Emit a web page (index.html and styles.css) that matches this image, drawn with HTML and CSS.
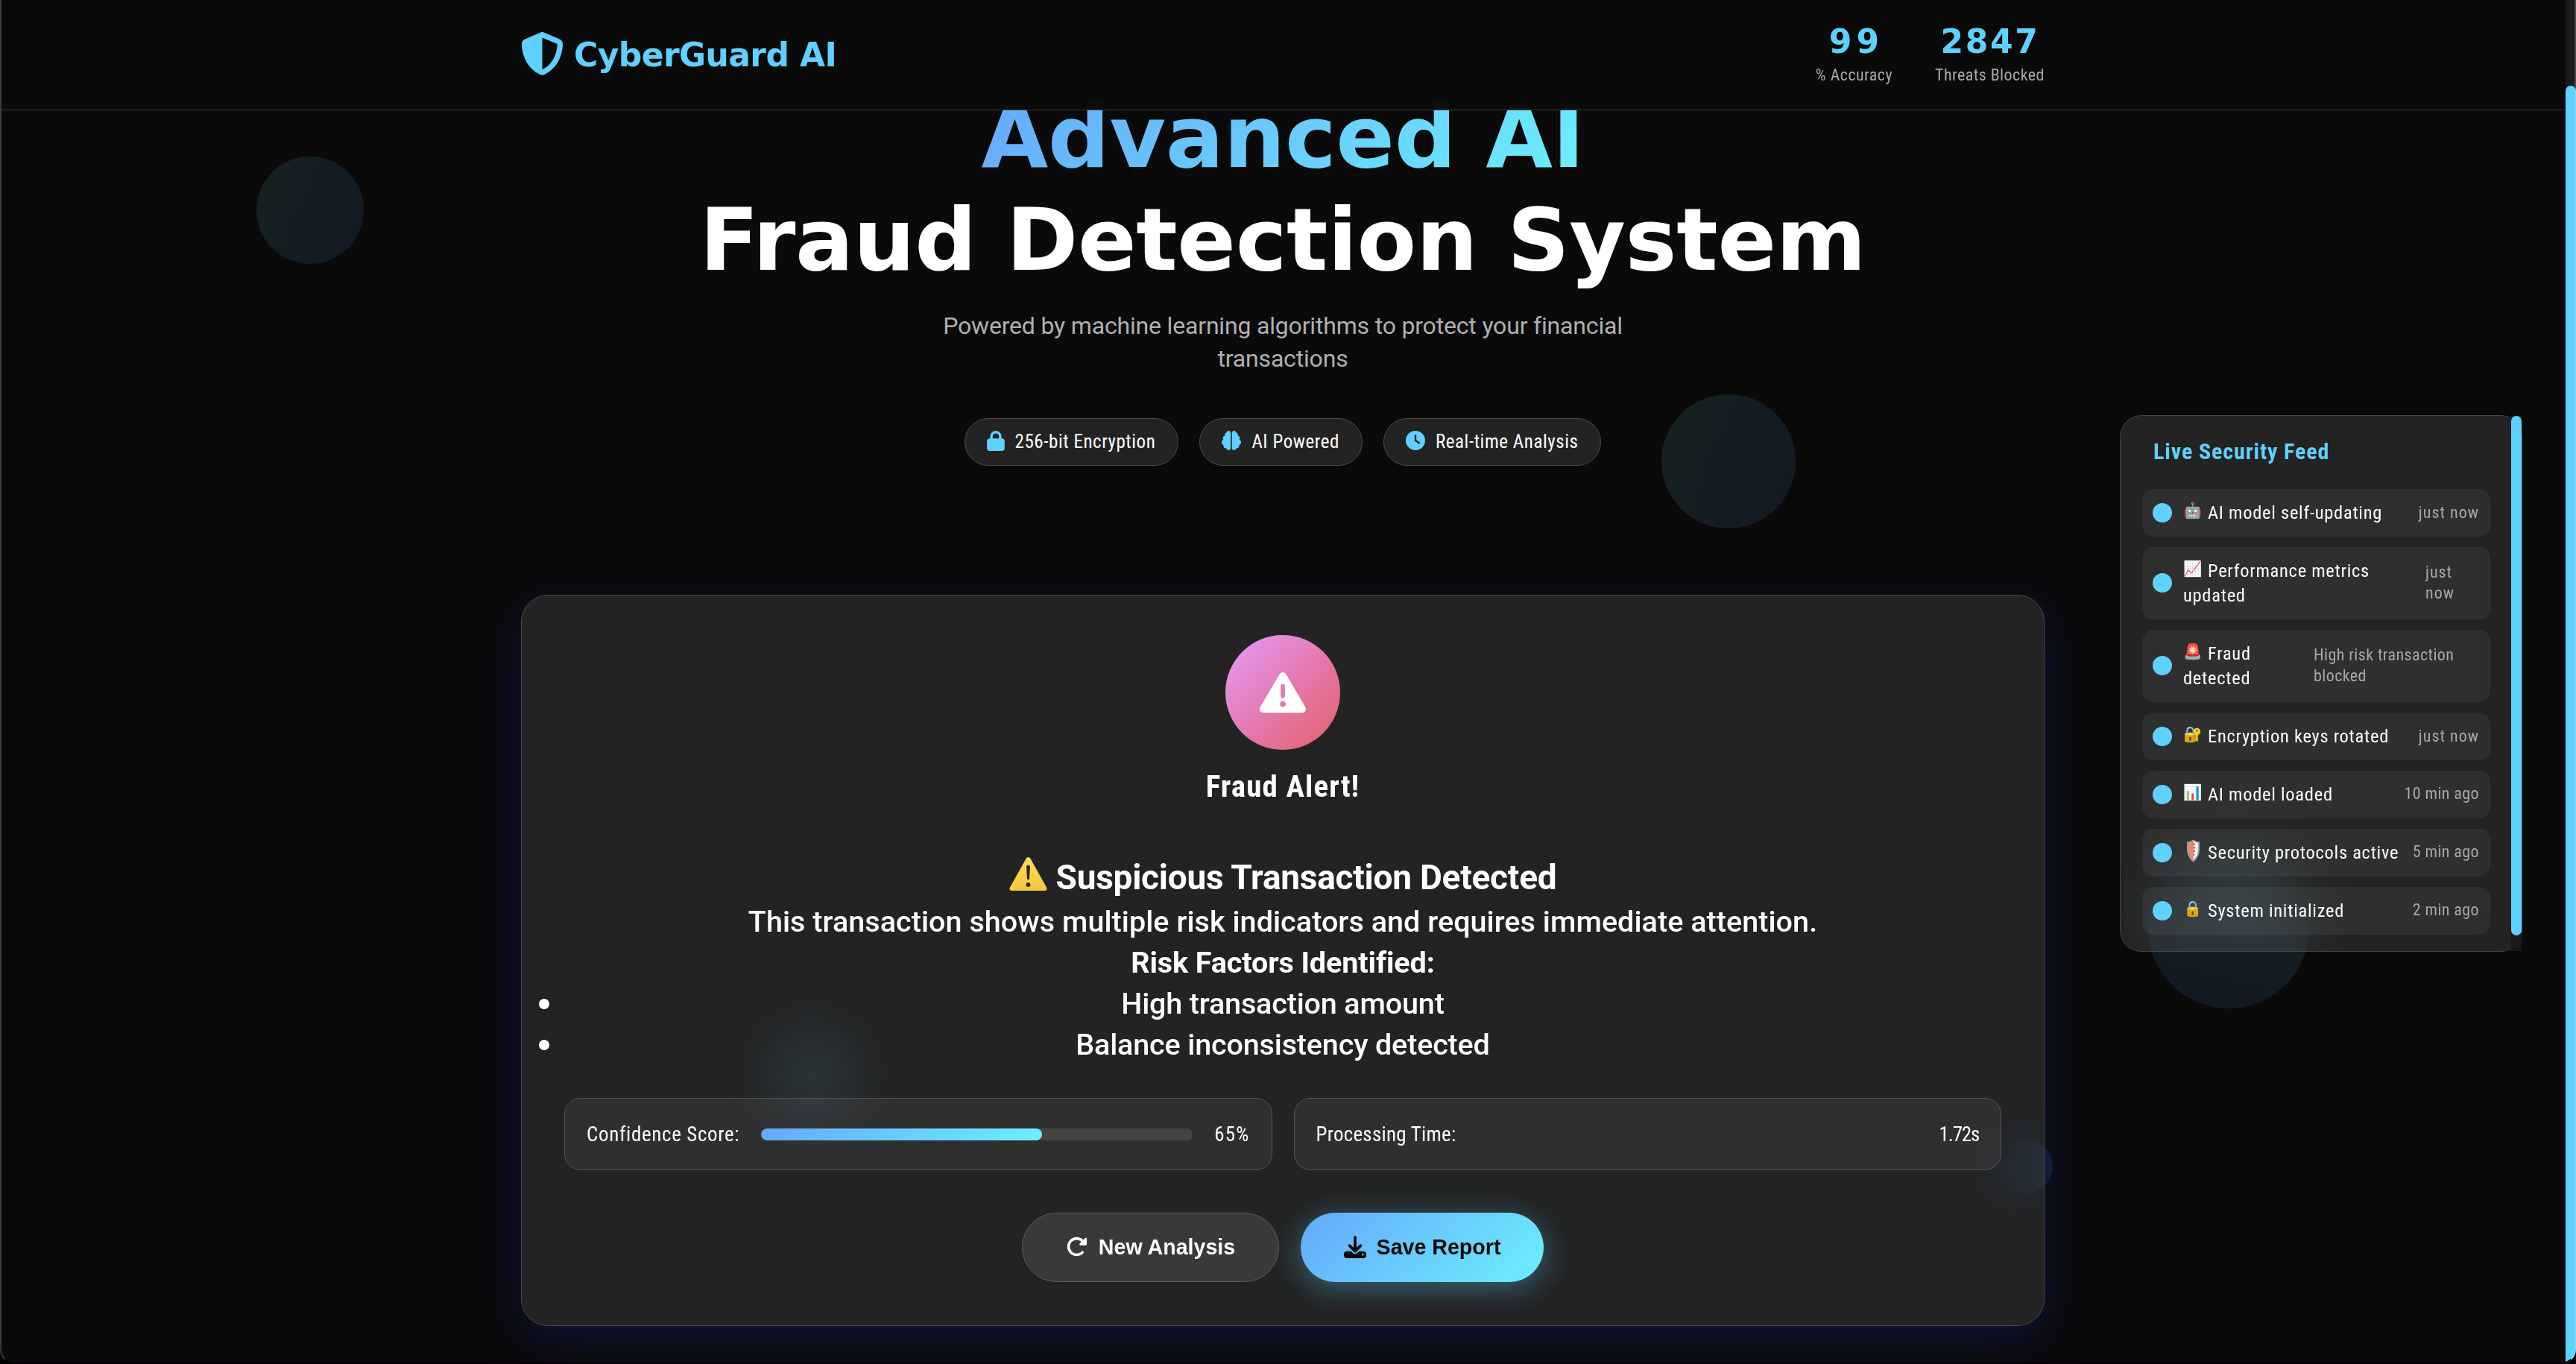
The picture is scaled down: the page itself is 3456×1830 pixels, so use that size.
FILE: index.html
```
<!DOCTYPE html>
<html lang="en">
<head>
<meta charset="utf-8">
<title>CyberGuard AI</title>
<link rel="stylesheet" href="styles.css">
</head>
<body>
<div class="orb orb-a"></div>
<div class="orb orb-b"></div>
<div class="orb orb-c"></div>
<div class="orb orb-d"></div>
<div class="orb orb-e"></div>

<header class="header">
  <div class="container header-row">
    <div class="logo">
      <svg class="logo-icon" viewBox="16 0 480 512" preserveAspectRatio="none"><path fill="currentColor" d="M256 0c4.6 0 9.2 1 13.4 2.9L457.7 82.8c22 9.3 38.4 31 38.3 57.2c-.5 99.2-41.3 280.7-213.6 363.2c-16.7 8-36.1 8-52.8 0C57.3 420.7 16.5 239.2 16 140c-.1-26.2 16.3-47.9 38.3-57.2L242.7 2.9C246.8 1 251.4 0 256 0zm0 66.8V444.8C394 378 431.1 230.1 432 141.4L256 66.8z"/></svg>
      <span class="logo-text">CyberGuard AI</span>
    </div>
    <div class="stats">
      <div class="stat"><span class="stat-number spaced">99</span><span class="stat-label">% Accuracy</span></div>
      <div class="stat"><span class="stat-number">2847</span><span class="stat-label">Threats Blocked</span></div>
    </div>
  </div>
</header>

<main class="main container">
  <section class="hero">
    <h1 class="hero-title"><span class="gradient-text">Advanced AI</span><br>Fraud Detection System</h1>
    <p class="hero-subtitle">Powered by machine learning algorithms to protect your financial<br>transactions</p>
    <div class="badges">
      <div class="badge"><svg class="badge-icon lock" viewBox="0 0 448 512"><path fill="currentColor" d="M144 144v48H304V144c0-44.2-35.8-80-80-80s-80 35.8-80 80zM80 192V144C80 64.5 144.5 0 224 0s144 64.5 144 144v48h16c35.3 0 64 28.7 64 64V448c0 35.3-28.7 64-64 64H64c-35.3 0-64-28.7-64-64V256c0-35.3 28.7-64 64-64H80z"/></svg><span>256-bit Encryption</span></div>
      <div class="badge"><svg class="badge-icon" viewBox="0 0 512 512"><g fill="currentColor"><path id="lobe" d="M184 0c30.9 0 56 25.1 56 56V456c0 30.9-25.1 56-56 56c-28.9 0-52.7-21.9-55.7-50.1c-5.2 1.4-10.7 2.1-16.3 2.1c-35.3 0-64-28.7-64-64c0-7.4 1.3-14.6 3.6-21.2C21.4 367.4 0 338.2 0 304c0-31.9 18.7-59.5 45.8-72.3C37.1 220.8 32 207 32 192c0-30.7 21.6-56.3 50.4-62.6C80.8 123.9 80 118 80 112c0-29.9 20.6-55.1 48.3-62.1C131.3 21.9 155.1 0 184 0z"/><use href="#lobe" transform="translate(512 0) scale(-1 1)"/></g></svg><span>AI Powered</span></div>
      <div class="badge"><svg class="badge-icon" viewBox="0 0 512 512"><path fill="currentColor" fill-rule="evenodd" d="M256 0a256 256 0 1 1 0 512A256 256 0 1 1 256 0zM232 120V256c0 8 4 15.5 10.7 20l96 64c11 7.4 25.9 4.4 33.3-6.7s4.4-25.9-6.7-33.3L280 243.2V120c0-13.3-10.7-24-24-24s-24 10.7-24 24z"/></svg><span>Real-time Analysis</span></div>
    </div>
  </section>

  <section class="card">
    <div class="alert-icon"><svg viewBox="0 0 512 512"><path fill="#fff" fill-rule="evenodd" d="M256 32c14.2 0 27.3 7.5 34.5 19.8l216 368c7.3 12.4 7.3 27.7 .2 40.1S486.3 480 472 480H40c-14.3 0-27.6-7.7-34.7-20.1s-7-27.8 .2-40.1l216-368C228.7 39.5 241.8 32 256 32zm0 128c-13.3 0-24 10.7-24 24V296c0 13.3 10.7 24 24 24s24-10.7 24-24V184c0-13.3-10.7-24-24-24zm32 224a32 32 0 1 0 -64 0 32 32 0 1 0 64 0z"/></svg></div>
    <h2 class="alert-title">Fraud Alert!</h2>
    <div class="result">
      <h3 class="result-title"><svg class="warning" viewBox="0 0 51 45"><defs><linearGradient id="amber" x1="0" y1="0" x2="0" y2="1"><stop offset="0" stop-color="#f9dd5c"/><stop offset="1" stop-color="#f7c53e"/></linearGradient></defs><path fill="url(#amber)" d="M22.8 1.6q2.7-3.2 5.4 0L50 40.500q2 4-2.500 4.500H3.500Q-1 44.500 1 40.500z"/><path fill="#2b2412" d="M23 12q2.500-2.600 5 0l-1 17q-1.500 2.600-3 0z"/><circle cx="25.500" cy="37" r="2.900" fill="#2b2412"/></svg><span>Suspicious Transaction Detected</span></h3>
      <p class="result-text">This transaction shows multiple risk indicators and requires immediate attention.</p>
      <h4 class="result-sub">Risk Factors Identified:</h4>
      <ul class="risks">
        <li>High transaction amount</li>
        <li>Balance inconsistency detected</li>
      </ul>
    </div>
    <div class="details">
      <div class="detail">
        <span>Confidence Score:</span>
        <div class="meter"><div class="meter-fill" style="width:65%"></div></div>
        <span class="percent">65%</span>
      </div>
      <div class="detail spread">
        <span class="narrow">Processing Time:</span>
        <span class="seconds">1.72s</span>
      </div>
    </div>
    <div class="actions">
      <button class="btn btn-secondary"><svg class="redo" viewBox="0 0 512 512"><path fill="currentColor" d="M463.500 224H472c13.300 0 24-10.700 24-24V72c0-9.700-5.800-18.500-14.800-22.200s-19.300-1.700-26.200 5.200L413.400 96.600c-87.600-86.500-228.700-86.200-315.800 1c-87.500 87.500-87.500 229.300 0 316.800s229.300 87.500 316.800 0c12.500-12.500 12.500-32.800 0-45.300s-32.800-12.500-45.300 0c-62.500 62.500-163.800 62.500-226.300 0s-62.500-163.800 0-226.300c62.200-62.200 162.700-62.500 225.300-1L327 183c-6.900 6.900-8.900 17.200-5.200 26.200s12.500 14.800 22.200 14.800H463.500z"/></svg>New Analysis</button>
      <button class="btn btn-primary"><svg class="download" viewBox="0 0 512 512"><path fill="currentColor" fill-rule="evenodd" d="M288 32c0-17.700-14.300-32-32-32s-32 14.300-32 32V274.700l-73.400-73.400c-12.500-12.500-32.800-12.500-45.300 0s-12.500 32.800 0 45.300l128 128c12.500 12.500 32.800 12.500 45.300 0l128-128c12.500-12.500 12.500-32.800 0-45.300s-32.800-12.500-45.300 0L288 274.700V32zM64 352c-35.300 0-64 28.700-64 64v32c0 35.300 28.700 64 64 64H448c35.300 0 64-28.700 64-64V416c0-35.300-28.700-64-64-64H346.500l-45.300 45.300c-25 25-65.500 25-90.500 0L165.500 352H64zm368 56a24 24 0 1 1 0 48 24 24 0 1 1 0-48z"/></svg>Save Report</button>
    </div>
  </section>
</main>

<aside class="feed">
  <div class="feed-body">
    <h3 class="feed-title">Live Security Feed</h3>
    <div class="feed-list">
      <div class="feed-item"><i class="dot"></i><span class="feed-text"><span class="emoji">🤖</span>AI model self-updating</span><span class="feed-time wide">just now</span></div>
      <div class="feed-item"><i class="dot"></i><span class="feed-text"><span class="emoji">📈</span>Performance metrics<br>updated</span><span class="feed-time wide just">just<br>now</span></div>
      <div class="feed-item"><i class="dot"></i><span class="feed-text"><span class="emoji">🚨</span>Fraud<br>detected</span><span class="feed-time risk">High risk transaction<br>blocked</span></div>
      <div class="feed-item"><i class="dot"></i><span class="feed-text"><span class="emoji">🔐</span>Encryption keys rotated</span><span class="feed-time wide">just now</span></div>
      <div class="feed-item"><i class="dot"></i><span class="feed-text"><span class="emoji">📊</span>AI model loaded</span><span class="feed-time">10 min ago</span></div>
      <div class="feed-item"><i class="dot"></i><span class="feed-text"><svg class="emoji shield" viewBox="0 0 18 32"><path fill="#9b9ca0" d="M0 3Q5 3 9 0q4 3 9 3v13q-1 10-9 16Q1 26 0 16z"/><path fill="#ef8571" d="M2 4.500Q6 4 9 2v27Q3 24 2 15z"/><path fill="#f3f3f3" d="M9 2q3 2 7 2.500V15q-1 9-7 14z"/><path fill="#c8452f" d="M9 4l3 2.500L9 9l3 2.500L9 14l3 2.500L9 19l2 2.500L9 24z"/></svg>Security protocols active</span><span class="feed-time">5 min ago</span></div>
      <div class="feed-item"><i class="dot"></i><span class="feed-text"><span class="emoji">🔒</span>System initialized</span><span class="feed-time">2 min ago</span></div>
    </div>
  </div>
</aside>
<div class="feed-scroll"><div class="feed-thumb"></div></div>

<div class="page-scroll"><div class="page-thumb"></div></div>
<div class="window-edge"></div>
</body>
</html>
```
FILE: styles.css
```
* { box-sizing: border-box; margin: 0; padding: 0; }

html, body { height: 1830px; overflow: hidden; }

body {
  background: #0a0a0a;
  color: #fff;
  font-family: Roboto, "Noto Sans", sans-serif;
  padding-right: 14px;
  position: relative;
}

svg { display: block; flex: none; }

.container { width: 2044px; margin: 0 auto; }

/* Floating background particles */
.orb {
  position: absolute;
  border-radius: 50%;
  background: linear-gradient(110deg, #152121 10%, #141d22 50%, #121923 95%);
}
.orb-a { left: 344px; top: 210px; width: 144px; height: 144px; }
.orb-b { left: 2229px; top: 529px; width: 180px; height: 180px; }
.orb-c { left: 2882px; top: 1137px; width: 216px; height: 216px; background: linear-gradient(195deg, #1a2826, #121923 80%); }
.orb-d { left: 1036px; top: 1386px; width: 108px; height: 108px; background: #14222a; }
.orb-e { left: 2682px; top: 1529px; width: 72px; height: 72px; background: #101c2c; z-index: 1; }

/* Header */
.header {
  position: fixed;
  left: 0;
  top: 0;
  width: 3442px;
  height: 148px;
  background: rgba(10, 10, 10, 0.98);
  border-bottom: 1px solid #3a3a3a;
  z-index: 10;
}
.header-row { display: flex; justify-content: space-between; align-items: flex-start; }
.logo { display: flex; align-items: center; gap: 15px; height: 147px; color: #5fd1ff; }
.logo-icon { width: 55px; height: 58px; margin-top: -3px; margin-left: 1px; }
.logo-text { font: 700 44px/60px "DejaVu Sans", sans-serif; letter-spacing: -0.6px; }
.stats { display: flex; gap: 57px; padding-top: 33px; text-align: center; }
.stat { display: flex; flex-direction: column; align-items: center; }
.stat-number { padding-left: 1px; font: 700 44px/45px "DejaVu Sans", sans-serif; letter-spacing: 2.6px; color: #5fd1ff; }
.stat-number.spaced { padding-left: 6px; letter-spacing: 6px; }
.stat-label { font-size: 22px; line-height: 45px; font-stretch: 75%; letter-spacing: 0.45px; color: #a8a8a8; white-space: nowrap; }

/* Hero */
.main { padding-top: 115px; }
.hero { text-align: center; }
.hero-title { font: 700 116px/137.5px "DejaVu Sans", sans-serif; letter-spacing: -0.35px; white-space: nowrap; }
.gradient-text {
  background: linear-gradient(135deg, #66a8fa, #6cf0fd);
  -webkit-background-clip: text;
  background-clip: text;
  color: transparent;
}
.hero-subtitle { margin-top: 25px; font-size: 32px; line-height: 44px; letter-spacing: -0.18px; color: #b0b0b0; }
.badges { display: flex; justify-content: center; gap: 28px; margin-top: 58px; }
.badge {
  display: flex;
  align-items: center;
  gap: 14px;
  height: 64px;
  padding: 0 30px 2px 29px;
  border: 1px solid #4a4a4a;
  border-radius: 32px;
  background: #232323;
  font-size: 25px;
  font-stretch: 75%;
  letter-spacing: 0.55px;
}
.badge-icon { width: 26px; height: 26px; color: #5fd1ff; margin-top: -2px; }
.badge-icon.lock { width: 24px; height: 27px; }

/* Result card */
.card {
  position: relative;
  height: 981px;
  margin-top: 173px;
  padding: 53px 57px 0;
  border: 1px solid #4a4a4a;
  border-radius: 36px;
  background: rgba(255, 255, 255, 0.105);
  backdrop-filter: blur(36px);
  box-shadow: 0 16px 64px rgba(31, 38, 135, 0.37);
  z-index: 2;
}
.alert-icon {
  display: flex;
  align-items: center;
  justify-content: center;
  width: 154px;
  height: 154px;
  margin: 0 auto;
  border-radius: 50%;
  background: linear-gradient(135deg, #e495f0 8%, #e37bb0 50%, #e3636f 92%);
}
.alert-icon svg { width: 62px; height: 62px; }
.alert-title { margin-top: 24px; font-size: 41px; line-height: 50px; font-stretch: 75%; letter-spacing: 1.1px; text-align: center; }
.result { margin-top: 68px; text-align: center; font-size: 39.5px; line-height: 55px; font-weight: 500; }
.result-title { display: flex; justify-content: center; align-items: center; gap: 12px; font-size: 46px; line-height: 58px; font-weight: 700; letter-spacing: -0.25px; }
.warning { width: 51px; height: 45px; margin-top: -9px; }
.result-text { margin-top: 3px; letter-spacing: 0.06px; }
.result-sub { font-size: inherit; font-weight: 700; letter-spacing: -0.1px; }
.risks { margin: 0 -57px; letter-spacing: -0.15px; list-style: none; }
.risks li { position: relative; }
.risks li::before {
  content: "";
  position: absolute;
  left: 23px;
  top: 21px;
  width: 14px;
  height: 14px;
  border-radius: 50%;
  background: #fff;
}
.details { display: grid; grid-template-columns: 1fr 1fr; gap: 29px; margin-top: 44px; }
.detail {
  display: flex;
  align-items: center;
  gap: 29px;
  height: 97px;
  padding: 0 29px;
  border: 1px solid #555;
  border-radius: 22px;
  background: rgba(255, 255, 255, 0.055);
  font-size: 27px;
  font-stretch: 75%;
  letter-spacing: 0.65px;
  white-space: nowrap;
}
.spread { justify-content: space-between; }
.percent { letter-spacing: 1.2px; }
.narrow { letter-spacing: 0.25px; }
.seconds { letter-spacing: -1.2px; }
.meter { flex: 1; height: 16px; border-radius: 8px; background: #444; overflow: hidden; }
.meter-fill { height: 100%; border-radius: 8px; background: linear-gradient(135deg, #66a8fa, #6cf0fd); }
.actions { display: flex; justify-content: center; gap: 29px; margin-top: 57px; }
.btn {
  display: flex;
  align-items: center;
  justify-content: center;
  height: 93px;
  border: 1px solid transparent;
  border-radius: 47px;
  font: 700 28.6px "Liberation Sans", Arial, sans-serif;
}
.btn-secondary { width: 345px; gap: 15px; background: #393939; border-color: #5c5c5c; color: #fff; }
.btn-primary {
  width: 326px;
  gap: 14px;
  border: 0;
  background: linear-gradient(135deg, #66a8fa, #6cf0fd);
  color: #0a0a0a;
  box-shadow: 0 8px 40px rgba(95, 209, 255, 0.38);
}
.redo { width: 29px; height: 29px; margin-top: -2px; }
.download { width: 30px; height: 30px; margin-top: -1px; }

/* Live feed, docked at the right side */
.feed {
  position: fixed;
  left: 2844px;
  top: 557px;
  width: 540px;
  height: 720px;
  padding: 23px 42px 0 29px;
  border: 1px solid #454545;
  border-radius: 29px;
  background: rgba(255, 255, 255, 0.105);
  backdrop-filter: blur(36px);
  z-index: 5;
}
.feed-title { padding-left: 15px; font-size: 30px; line-height: 50px; font-stretch: 75%; letter-spacing: 0.9px; color: #5fd1ff; }
.feed-list { display: flex; flex-direction: column; gap: 14.4px; margin-top: 25px; }
.feed-item {
  display: flex;
  align-items: center;
  gap: 15px;
  padding: 15.3px 15px 15.3px 14px;
  border-radius: 15px;
  background: rgba(255, 255, 255, 0.055);
  white-space: nowrap;
}
.dot { flex: none; width: 26px; height: 26px; border-radius: 50%; background: #5fd1ff; }
.feed-text { flex: 1; font-size: 24.5px; line-height: 33px; font-stretch: 75%; letter-spacing: 0.72px; }
.feed-time { font-size: 22px; line-height: 28.5px; font-stretch: 75%; letter-spacing: 0.4px; color: #a8a8a8; }
.feed-time.wide { letter-spacing: 1px; }
.feed-time.just { width: 72px; }
.feed-time.risk { width: 222px; }
.emoji {
  display: inline-block;
  width: 26px;
  height: 30px;
  margin-right: 7px;
  font-size: 20.5px;
  line-height: 28px;
  letter-spacing: 0;
  vertical-align: top;
}
.emoji.shield { width: 17px; height: 31px; margin: -1px 11px 0 5px; }
.feed-scroll { position: fixed; left: 3369px; top: 558px; width: 14px; height: 718px; background: #1a1a1a; z-index: 6; }
.feed-thumb { height: 697px; border-radius: 7px; background: #5fd1ff; }

/* Page scrollbar and window frame */
.page-scroll { position: fixed; left: 3442px; top: 0; width: 14px; height: 1830px; padding-top: 115px; background: #1a1a1a; z-index: 20; }
.page-thumb { height: 1715px; border-radius: 7px 7px 0 0; background: #5fd1ff; }
.window-edge {
  position: fixed;
  inset: -40px 0 0 0;
  border: 2px solid rgba(255, 255, 255, 0.2);
  border-bottom: 2px solid #060207;
  border-radius: 0 0 20px 20px;
  box-shadow: 0 0 0 30px #000;
  pointer-events: none;
  z-index: 30;
}
```
